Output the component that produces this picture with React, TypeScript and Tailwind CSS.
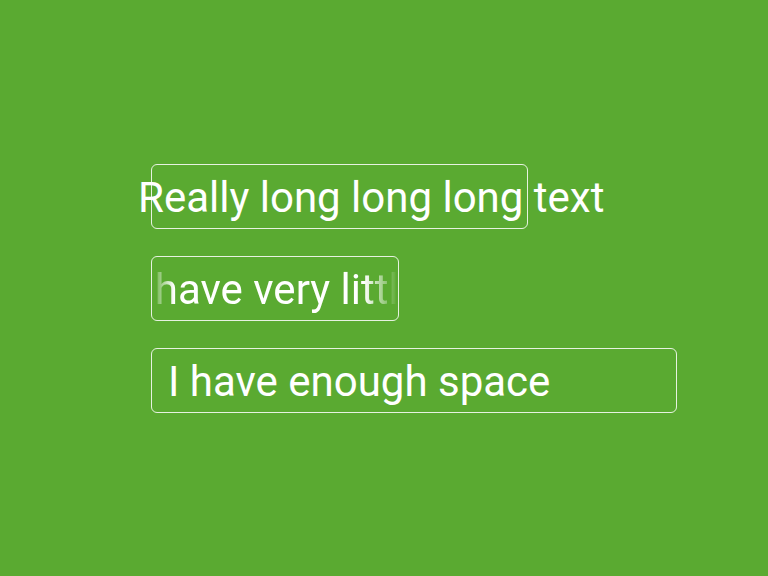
const rows = [
  { label: 'Really long long long text', width: 'w-[377px]', shift: '-translate-x-[30px]', mode: 'overflow' },
  { label: 'I have very little space', width: 'w-[248px]', shift: '-translate-x-[35px]', mode: 'fade' },
  { label: 'I have enough space', width: 'w-[526px]', shift: '', mode: 'fit' },
];

function MarqueeBox({ label, width, shift, mode }: (typeof rows)[number]) {
  if (mode === 'fade') {
    return (
      <div className={`h-[65px] ${width} rounded-md border border-white/85`}>
        <div className="flex h-full items-center overflow-hidden [mask-image:linear-gradient(to_right,transparent_0px,black_22px,black_calc(100%-34px),transparent_100%)]">
          <span className={`whitespace-nowrap pl-4 pt-1 ${shift}`}>{label}</span>
        </div>
      </div>
    );
  }
  return (
    <div className={`flex h-[65px] ${width} items-center rounded-md border border-white/85 px-4`}>
      <span className={`whitespace-nowrap pt-1 ${shift}`}>{label}</span>
    </div>
  );
}

export default function App() {
  return (
    <div className="flex h-[576px] w-[768px] flex-col justify-center gap-[27px] bg-[#5aaa31] pl-[151px] font-['Roboto',sans-serif] text-[42px] leading-none text-white">
      {rows.map((row) => (
        <MarqueeBox key={row.label} {...row} />
      ))}
    </div>
  );
}
